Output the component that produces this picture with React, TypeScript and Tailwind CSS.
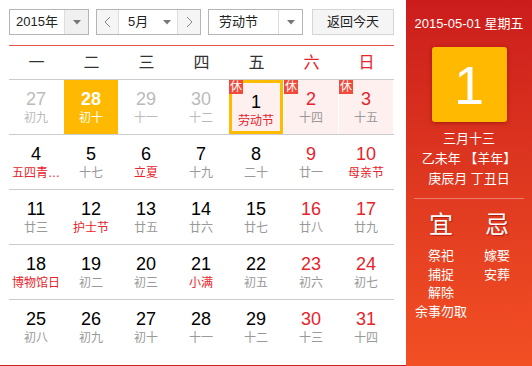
import React from "react";

type Day = {
  n: number;
  l: string;
  prev?: boolean;
  red?: boolean; // weekend number
  fest?: boolean; // red lunar / festival text
  rest?: boolean;
  sel?: boolean;
  today?: boolean;
};

const weeks: Day[][] = [
  [
    { n: 27, l: "初九", prev: true },
    { n: 28, l: "初十", prev: true, sel: true },
    { n: 29, l: "十一", prev: true },
    { n: 30, l: "十二", prev: true },
    { n: 1, l: "劳动节", fest: true, rest: true, today: true },
    { n: 2, l: "十四", red: true, rest: true },
    { n: 3, l: "十五", red: true, rest: true },
  ],
  [
    { n: 4, l: "五四青…", fest: true },
    { n: 5, l: "十七" },
    { n: 6, l: "立夏", fest: true },
    { n: 7, l: "十九" },
    { n: 8, l: "二十" },
    { n: 9, l: "廿一", red: true },
    { n: 10, l: "母亲节", red: true, fest: true },
  ],
  [
    { n: 11, l: "廿三" },
    { n: 12, l: "护士节", fest: true },
    { n: 13, l: "廿五" },
    { n: 14, l: "廿六" },
    { n: 15, l: "廿七" },
    { n: 16, l: "廿八", red: true },
    { n: 17, l: "廿九", red: true },
  ],
  [
    { n: 18, l: "博物馆日", fest: true },
    { n: 19, l: "初二" },
    { n: 20, l: "初三" },
    { n: 21, l: "小满", fest: true },
    { n: 22, l: "初五" },
    { n: 23, l: "初六", red: true },
    { n: 24, l: "初七", red: true },
  ],
  [
    { n: 25, l: "初八" },
    { n: 26, l: "初九" },
    { n: 27, l: "初十" },
    { n: 28, l: "十一" },
    { n: 29, l: "十二" },
    { n: 30, l: "十三", red: true },
    { n: 31, l: "十四", red: true },
  ],
];

const weekdays = ["一", "二", "三", "四", "五", "六", "日"];

function Caret() {
  return (
    <svg width="8" height="5" viewBox="0 0 8 5">
      <path d="M0 0h8L4 4.5z" fill="#777" />
    </svg>
  );
}

function Chevron({ dir }: { dir: "l" | "r" }) {
  return (
    <svg width="7" height="12" viewBox="0 0 7 12">
      <polyline
        points={dir === "l" ? "6,1 1,6 6,11" : "1,1 6,6 1,11"}
        fill="none"
        stroke="#888"
        strokeWidth="1"
      />
    </svg>
  );
}

function Cell({ d }: { d: Day }) {
  let bg = "";
  if (d.sel) bg = "bg-[#ffb900]";
  else if (d.rest) bg = "bg-[#fff0f0]";

  const numColor = d.sel
    ? "text-white font-bold"
    : d.prev
    ? "text-[#bbbbbb]"
    : d.red
    ? "text-[#e8232a]"
    : "text-black";

  const lunarColor = d.sel
    ? "text-white"
    : d.prev
    ? "text-[#bbbbbb]"
    : d.fest
    ? "text-[#e8232a]"
    : "text-[#999999]";

  return (
    <div
      className={`relative w-[54px] h-[54px] mr-px flex flex-col items-center pt-[9px] ${bg} ${
        d.today ? "border-[3px] border-[#ffbb00] pt-[6px]" : ""
      }`}
    >
      {d.rest && (
        <span
          className={`absolute ${
            d.today ? "-left-[3px] -top-[3px]" : "left-0 top-0"
          } w-[14px] h-[14px] bg-[#f24a3a] text-white text-[12px] leading-[14px] text-center`}
        >
          休
        </span>
      )}
      <div className={`text-[18px] leading-[20px] ${numColor}`}>{d.n}</div>
      <div className={`text-[12px] leading-[18px] whitespace-nowrap ${lunarColor}`}>{d.l}</div>
    </div>
  );
}

export default function App() {
  return (
    <div className="w-[532px] h-[366px] flex bg-white font-['Liberation_Sans','Noto_Sans_CJK_SC',sans-serif] overflow-hidden">
      {/* calendar side */}
      <div className="w-[406px] h-[366px] border-b border-[#c9201f] flex flex-col">
        <div className="flex items-center h-[26px] mt-[9px] ml-[9px] text-[13px] text-[#222]">
          <div className="flex w-[80px] h-[26px] border border-[#b5b5b5]">
            <div className="flex-1 flex items-center justify-center">2015年</div>
            <div className="w-[24px] bg-[#f0f0f0] border-l border-[#dddddd] flex items-center justify-center">
              <Caret />
            </div>
          </div>
          <div className="flex w-[105px] h-[26px] ml-[7px] border border-[#b5b5b5]">
            <div className="w-[22px] bg-[#f5f5f5] border-r border-[#dddddd] flex items-center justify-center">
              <Chevron dir="l" />
            </div>
            <div className="flex-1 flex items-center pl-[9px] gap-[15px]">
              <span>5月</span>
              <Caret />
            </div>
            <div className="w-[23px] bg-[#f5f5f5] border-l border-[#dddddd] flex items-center justify-center">
              <Chevron dir="r" />
            </div>
          </div>
          <div className="flex w-[95px] h-[26px] ml-[7px] border border-[#b5b5b5]">
            <div className="flex-1 flex items-center pl-[10px]">劳动节</div>
            <div className="w-[24px] border-l border-[#dddddd] flex items-center justify-center">
              <Caret />
            </div>
          </div>
          <button className="w-[82px] h-[26px] ml-[9px] bg-[#f5f5f5] border border-[#d5d5d5] text-[13px] text-[#222]">
            返回今天
          </button>
        </div>

        <div className="ml-[9px] w-[385px] mt-[10px] border-t border-[#e4544a]">
          <div className="flex h-[34px] items-center border-b border-[#cccccc]">
            {weekdays.map((w, i) => (
              <div
                key={w}
                className={`w-[55px] text-center text-[16px] ${i >= 5 ? "text-[#e8232a]" : "text-[#333]"}`}
              >
                {w}
              </div>
            ))}
          </div>
          {weeks.map((wk, i) => (
            <div
              key={i}
              className={`flex h-[55px] ${i < weeks.length - 1 ? "border-b border-[#cccccc]" : ""}`}
            >
              {wk.map((d, j) => (
                <Cell key={j} d={d} />
              ))}
            </div>
          ))}
        </div>
      </div>

      {/* detail side */}
      <div className="w-[126px] h-[366px] bg-gradient-to-b from-[#cb1c1c] to-[#f34f24] text-white flex flex-col items-center">
        <div className="mt-[15px] text-[13px] leading-[18px] whitespace-nowrap">2015-05-01 星期五</div>
        <div className="mt-[14px] w-[75px] h-[75px] rounded-[3px] bg-[#ffb900] shadow-[0_1px_4px_rgba(120,0,0,0.5)] flex items-center justify-center text-[54px] leading-none">
          1
        </div>
        <div className="mt-[7px] text-[13px] leading-[20px] text-center">
          <div>三月十三</div>
          <div>乙未年 【羊年】</div>
          <div>庚辰月 丁丑日</div>
        </div>
        <div className="mt-[9px] w-[110px] h-px bg-[rgba(255,255,255,0.35)]" />
        <div className="mt-[12px] flex w-[110px] justify-between px-[4px]">
          <div className="w-[46px] flex flex-col items-center">
            <div className="text-[24px] leading-[28px] [text-shadow:1px_1px_1px_rgba(120,0,0,0.5)]">宜</div>
            <div className="mt-[8px] text-[13px] leading-[18.5px] text-center whitespace-nowrap">
              <div>祭祀</div>
              <div>捕捉</div>
              <div>解除</div>
              <div>余事勿取</div>
            </div>
          </div>
          <div className="w-[46px] flex flex-col items-center">
            <div className="text-[24px] leading-[28px] [text-shadow:1px_1px_1px_rgba(120,0,0,0.5)]">忌</div>
            <div className="mt-[8px] text-[13px] leading-[18.5px] text-center whitespace-nowrap">
              <div>嫁娶</div>
              <div>安葬</div>
            </div>
          </div>
        </div>
      </div>
    </div>
  );
}
